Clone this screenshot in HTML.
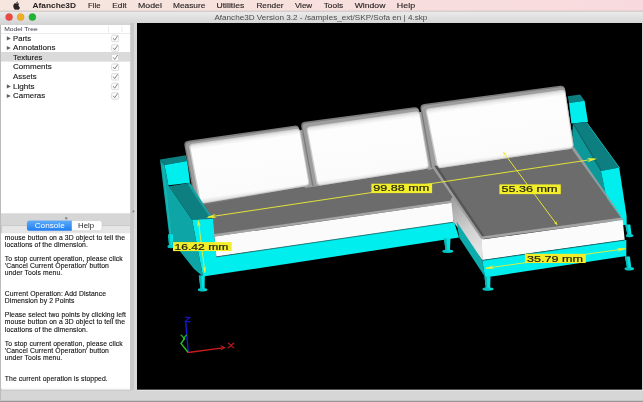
<!DOCTYPE html>
<html><head><meta charset="utf-8">
<style>
html,body{margin:0;padding:0;}
body{width:643px;height:402px;position:relative;overflow:hidden;background:#d6d6d6;font-family:"Liberation Sans",sans-serif;}
.abs{position:absolute;}
#console div{position:absolute;left:3.8px;font-size:6.8px;line-height:7.04px;letter-spacing:0.1px;color:#0c0c0c;white-space:pre;-webkit-text-stroke:0.1px #0c0c0c;}
svg text{font-family:"Liberation Sans",sans-serif;}
</style></head><body>
<div id="wrap" style="position:absolute;left:0;top:0;width:643px;height:402px;filter:blur(0.25px);">
<svg class="abs" style="left:0;top:0" width="643" height="402" viewBox="0 0 643 402">
<defs>
<linearGradient id="mbg" x1="0" y1="0" x2="1" y2="0"><stop offset="0" stop-color="#f6e6df"/><stop offset="0.5" stop-color="#f7e0dd"/><stop offset="1" stop-color="#f8dade"/></linearGradient>
<linearGradient id="tbg" x1="0" y1="0" x2="0" y2="1"><stop offset="0" stop-color="#ebebeb"/><stop offset="1" stop-color="#d2d2d2"/></linearGradient>
<linearGradient id="blue" x1="0" y1="0" x2="0" y2="1"><stop offset="0" stop-color="#5eaaf8"/><stop offset="1" stop-color="#1f7ef1"/></linearGradient>
</defs>
<rect x="0" y="0" width="643" height="402" fill="#d6d6d6"/>
<rect x="0" y="0" width="643" height="11" fill="url(#mbg)"/>
<rect x="0" y="10.8" width="643" height="0.8" fill="#b9adaa"/>
<rect x="0" y="11.6" width="643" height="13.4" fill="url(#tbg)"/>
<path transform="translate(13,1.3) scale(0.485)" d="M11.2 8.5c0-1.8 1.5-2.7 1.6-2.8-.9-1.3-2.2-1.5-2.7-1.5-1.1-.1-2.2.7-2.8.7-.6 0-1.5-.7-2.4-.7C3.6 4.2 2.1 5.1 1.4 6.5c-1.6 2.7-.4 6.7 1.1 8.9.8 1 1.6 2.2 2.7 2.1 1.1 0 1.5-.7 2.8-.7 1.3 0 1.7.7 2.8.7 1.2 0 1.9-1.1 2.6-2.1.8-1.2 1.2-2.4 1.2-2.4-.1 0-2.4-.9-2.4-3.5zM9.2 3.1c.6-.7 1-1.7.9-2.7-.9 0-1.9.6-2.5 1.3-.5.6-1 1.6-.9 2.6 1 .1 1.9-.5 2.5-1.2z" fill="#2a2424"/>
<text x="88.1" y="7.9" font-size="7.2" fill="#241e1e" font-weight="normal" textLength="12.6" lengthAdjust="spacingAndGlyphs" stroke="#241e1e" stroke-width="0.12">File</text><text x="112.3" y="7.9" font-size="7.2" fill="#241e1e" font-weight="normal" textLength="14.3" lengthAdjust="spacingAndGlyphs" stroke="#241e1e" stroke-width="0.12">Edit</text><text x="138" y="7.9" font-size="7.2" fill="#241e1e" font-weight="normal" textLength="23.9" lengthAdjust="spacingAndGlyphs" stroke="#241e1e" stroke-width="0.12">Model</text><text x="173" y="7.9" font-size="7.2" fill="#241e1e" font-weight="normal" textLength="32.4" lengthAdjust="spacingAndGlyphs" stroke="#241e1e" stroke-width="0.12">Measure</text><text x="216.5" y="7.9" font-size="7.2" fill="#241e1e" font-weight="normal" textLength="27.8" lengthAdjust="spacingAndGlyphs" stroke="#241e1e" stroke-width="0.12">Utilities</text><text x="256.4" y="7.9" font-size="7.2" fill="#241e1e" font-weight="normal" textLength="27.1" lengthAdjust="spacingAndGlyphs" stroke="#241e1e" stroke-width="0.12">Render</text><text x="294.9" y="7.9" font-size="7.2" fill="#241e1e" font-weight="normal" textLength="17.3" lengthAdjust="spacingAndGlyphs" stroke="#241e1e" stroke-width="0.12">View</text><text x="323.7" y="7.9" font-size="7.2" fill="#241e1e" font-weight="normal" textLength="19.5" lengthAdjust="spacingAndGlyphs" stroke="#241e1e" stroke-width="0.12">Tools</text><text x="354.7" y="7.9" font-size="7.2" fill="#241e1e" font-weight="normal" textLength="30.7" lengthAdjust="spacingAndGlyphs" stroke="#241e1e" stroke-width="0.12">Window</text><text x="396.8" y="7.9" font-size="7.2" fill="#241e1e" font-weight="normal" textLength="18.3" lengthAdjust="spacingAndGlyphs" stroke="#241e1e" stroke-width="0.12">Help</text><text x="32.5" y="7.9" font-size="7.4" fill="#221c1c" font-weight="bold" textLength="43.5" lengthAdjust="spacingAndGlyphs" >Afanche3D</text>
<circle cx="9.1" cy="17.1" r="3.5" fill="#ec4b45" stroke="#d63c37" stroke-width="0.4"/>
<circle cx="20.6" cy="17.1" r="3.5" fill="#eeae25" stroke="#d9981a" stroke-width="0.4"/>
<circle cx="32.4" cy="17.1" r="3.5" fill="#22b334" stroke="#179a28" stroke-width="0.4"/>
<text x="214.4" y="20.1" font-size="7" fill="#4c4c4c" font-weight="normal" textLength="213" lengthAdjust="spacingAndGlyphs" >Afanche3D Version 3.2 - /samples_ext/SKP/Sofa en | 4.skp</text>
<!-- tree -->
<rect x="1" y="25" width="129.3" height="188.3" fill="#fff"/>
<rect x="1" y="33" width="129.3" height="0.7" fill="#e2e2e2"/>
<rect x="108.2" y="26" width="0.7" height="6.5" fill="#e4e4e4"/>
<rect x="121.6" y="26" width="0.7" height="6.5" fill="#e4e4e4"/>
<text x="4.2" y="31" font-size="6" fill="#3a3a4a" font-weight="normal" textLength="33.6" lengthAdjust="spacingAndGlyphs" >Model Tree</text>
<polygon points="6.8,36.30 10.8,38.40 6.8,40.50" fill="#626262"/><text x="13.1" y="40.6" font-size="7.8" fill="#161616" font-weight="normal" textLength="17.9" lengthAdjust="spacingAndGlyphs" stroke="#161616" stroke-width="0.12">Parts</text><rect x="111.6" y="35.10" width="7" height="6.6" rx="1.3" fill="#fbfbfb" stroke="#cfcfcf" stroke-width="0.7"/><polyline points="113.2,38.20 114.7,40.20 117.6,35.80" fill="none" stroke="#7a7a7a" stroke-width="0.9"/><polygon points="6.8,45.90 10.8,48.00 6.8,50.10" fill="#626262"/><text x="13.1" y="50.2" font-size="7.8" fill="#161616" font-weight="normal" textLength="42.5" lengthAdjust="spacingAndGlyphs" stroke="#161616" stroke-width="0.12">Annotations</text><rect x="111.6" y="44.70" width="7" height="6.6" rx="1.3" fill="#fbfbfb" stroke="#cfcfcf" stroke-width="0.7"/><polyline points="113.2,47.80 114.7,49.80 117.6,45.40" fill="none" stroke="#7a7a7a" stroke-width="0.9"/><rect x="1" y="52.00" width="129.3" height="9.6" fill="#dadada"/><text x="13.1" y="59.8" font-size="7.8" fill="#161616" font-weight="normal" textLength="29.3" lengthAdjust="spacingAndGlyphs" stroke="#161616" stroke-width="0.12">Textures</text><rect x="111.6" y="54.30" width="7" height="6.6" rx="1.3" fill="#fbfbfb" stroke="#cfcfcf" stroke-width="0.7"/><polyline points="113.2,57.40 114.7,59.40 117.6,55.00" fill="none" stroke="#7a7a7a" stroke-width="0.9"/><text x="13.1" y="69.4" font-size="7.8" fill="#161616" font-weight="normal" textLength="38.7" lengthAdjust="spacingAndGlyphs" stroke="#161616" stroke-width="0.12">Comments</text><rect x="111.6" y="63.90" width="7" height="6.6" rx="1.3" fill="#fbfbfb" stroke="#cfcfcf" stroke-width="0.7"/><polyline points="113.2,67.00 114.7,69.00 117.6,64.60" fill="none" stroke="#7a7a7a" stroke-width="0.9"/><text x="13.1" y="79.0" font-size="7.8" fill="#161616" font-weight="normal" textLength="23.5" lengthAdjust="spacingAndGlyphs" stroke="#161616" stroke-width="0.12">Assets</text><rect x="111.6" y="73.50" width="7" height="6.6" rx="1.3" fill="#fbfbfb" stroke="#cfcfcf" stroke-width="0.7"/><polyline points="113.2,76.60 114.7,78.60 117.6,74.20" fill="none" stroke="#7a7a7a" stroke-width="0.9"/><polygon points="6.8,84.30 10.8,86.40 6.8,88.50" fill="#626262"/><text x="13.1" y="88.6" font-size="7.8" fill="#161616" font-weight="normal" textLength="21.5" lengthAdjust="spacingAndGlyphs" stroke="#161616" stroke-width="0.12">Lights</text><rect x="111.6" y="83.10" width="7" height="6.6" rx="1.3" fill="#fbfbfb" stroke="#cfcfcf" stroke-width="0.7"/><polyline points="113.2,86.20 114.7,88.20 117.6,83.80" fill="none" stroke="#7a7a7a" stroke-width="0.9"/><polygon points="6.8,93.90 10.8,96.00 6.8,98.10" fill="#626262"/><text x="13.1" y="98.19999999999999" font-size="7.8" fill="#161616" font-weight="normal" textLength="32" lengthAdjust="spacingAndGlyphs" stroke="#161616" stroke-width="0.12">Cameras</text><rect x="111.6" y="92.70" width="7" height="6.6" rx="1.3" fill="#fbfbfb" stroke="#cfcfcf" stroke-width="0.7"/><polyline points="113.2,95.80 114.7,97.80 117.6,93.40" fill="none" stroke="#7a7a7a" stroke-width="0.9"/>
<!-- console box -->
<rect x="1.5" y="225.5" width="129" height="165" fill="#e6e6e6" stroke="#c6c6c6" stroke-width="0.8"/>
<rect x="27" y="220.6" width="75" height="10.2" rx="2.6" fill="#fff" stroke="#c4c4c4" stroke-width="0.5"/>
<path d="M29.6,220.6 H71.8 V230.8 H29.6 A2.6,2.6 0 0 1 27,228.2 V223.2 A2.6,2.6 0 0 1 29.6,220.6Z" fill="url(#blue)"/>
<text x="34.7" y="228.3" font-size="7.4" fill="#ffffff" font-weight="normal" textLength="30" lengthAdjust="spacingAndGlyphs" >Console</text>
<text x="78.1" y="228.3" font-size="7.4" fill="#1e1e1e" font-weight="normal" textLength="16" lengthAdjust="spacingAndGlyphs" >Help</text>
<circle cx="66.2" cy="218.3" r="1.2" fill="#8a8a8a"/>
<rect x="130.3" y="23" width="3.7" height="367" fill="#c9c9c9"/><rect x="134" y="23" width="3" height="367" fill="#d9d9d9"/>
<circle cx="133.4" cy="211.4" r="1.1" fill="#8a8a8a"/>
<rect x="1" y="233.3" width="129" height="155.5" fill="#fff"/>
<!-- viewport -->
<rect x="137" y="23" width="505" height="366.8" fill="#000"/>
<rect x="137" y="389.8" width="506" height="1.2" fill="#e3e3e3"/>
<linearGradient id="bl" x1="0" y1="0" x2="0" y2="1"><stop offset="0" stop-color="#c8c8c8"/><stop offset="1" stop-color="#858585"/></linearGradient>
<rect x="0" y="400.3" width="643" height="1.7" fill="url(#bl)"/>
<rect x="0" y="25" width="0.8" height="375" fill="#b4b4b4"/>
<!-- SCENE -->
<filter id="soft" x="0" y="0" width="1" height="1"><feGaussianBlur stdDeviation="0.2"/></filter>
<g filter="url(#soft)">
<defs>
<linearGradient id="cushW" x1="0" y1="0" x2="0" y2="1"><stop offset="0" stop-color="#ffffff"/><stop offset="0.85" stop-color="#fcfcfc"/><stop offset="1" stop-color="#e4e4e4"/></linearGradient>
<linearGradient id="sideG" x1="0" y1="0" x2="0.3" y2="1"><stop offset="0" stop-color="#9a9a9a"/><stop offset="0.6" stop-color="#cfcfcf"/><stop offset="1" stop-color="#e2e2e2"/></linearGradient>
</defs>
<polygon points="160.00,159.50 164.50,164.90 168.40,185.30 192.10,219.80 203.00,276.60 194.00,269.00 169.50,237.90" fill="#0fa5a6" />
<line x1="163.2" y1="166" x2="170.8" y2="236.5" stroke="#16b8b8" stroke-width="1.3"/>
<polygon points="160.00,159.50 186.00,155.20 187.20,161.00 164.50,164.90" fill="#0c7f80" />
<polygon points="164.50,164.90 187.20,161.00 190.00,182.80 168.40,185.30" fill="#00eeee" />
<polygon points="567.80,96.20 580.10,94.40 584.60,100.70 569.00,102.90" fill="#0c7f80" />
<polygon points="569.00,102.90 584.60,100.70 588.00,121.90 571.40,123.40" fill="#00eeee" />
<polygon points="572.90,123.40 600.90,170.90 607.00,200.00 620.00,222.00 571.40,148.80" fill="#11999a" />
<polygon points="572.90,123.40 586.30,121.90 619.20,167.50 600.90,170.90" fill="#0c7f80" />
<line x1="574" y1="124.5" x2="601.8" y2="170.5" stroke="#0a6a6b" stroke-width="0.9"/>
<line x1="586.8" y1="122.8" x2="619.6" y2="168" stroke="#18b0b0" stroke-width="1"/>
<polygon points="600.90,170.90 619.20,167.50 626.60,216.00 626.70,225.00 612.00,225.00" fill="#00eeee" />
<polygon points="188.00,185.00 440.00,155.00 453.00,199.00 453.00,202.50 214.00,236.50 200.00,222.00" fill="#6c6c6c" />
<polygon points="431.00,160.00 565.00,140.00 571.40,148.80 622.70,219.90 482.00,239.00" fill="#6c6c6c" />
<polygon points="296.00,132.00 306.00,128.00 318.00,186.00 305.00,188.00" fill="#a0a0a0" />
<polygon points="415.00,113.00 425.00,111.00 438.00,168.00 428.00,170.00" fill="#a0a0a0" />
<linearGradient id="cg1" gradientUnits="userSpaceOnUse" x1="244.2" y1="136.4" x2="252.5" y2="195.1"><stop offset="0" stop-color="#cfcfcf"/><stop offset="0.05" stop-color="#eeeeee"/><stop offset="0.1" stop-color="#fdfdfd"/><stop offset="0.93" stop-color="#fbfbfb"/><stop offset="1" stop-color="#e2e2e2"/></linearGradient><path d="M184.51,145.93 Q183.70,141.50 188.15,140.86 L294.15,125.64 Q298.60,125.00 299.43,129.42 L309.07,181.08 Q309.90,185.50 305.47,186.30 L201.44,205.17 Q199.60,205.50 197.74,205.64 L197.36,205.66 Q195.50,205.80 195.16,203.96Z" fill="#7c7c7c" /><path d="M186.03,146.83 Q185.30,142.90 189.26,142.33 L294.84,127.07 Q298.80,126.50 299.54,130.43 L309.16,181.57 Q309.90,185.50 305.96,186.16 L201.29,203.75 Q199.80,204.00 198.53,204.82 L198.27,204.98 Q197.00,205.80 196.72,204.31Z" fill="#9e9e9e" /><path d="M189.34,148.23 Q188.60,144.30 192.56,143.74 L295.84,129.06 Q299.80,128.50 300.50,132.44 L309.20,181.56 Q309.90,185.50 305.96,186.16 L203.74,203.34 Q199.80,204.00 199.06,200.07Z" fill="#cdcdcd" /><path d="M190.56,148.34 Q189.90,144.90 193.36,144.39 L295.54,129.41 Q299.00,128.90 299.60,132.35 L308.10,181.05 Q308.70,184.50 305.25,185.09 L204.55,202.41 Q201.10,203.00 200.44,199.56Z" fill="url(#cg1)" />
<linearGradient id="cg2" gradientUnits="userSpaceOnUse" x1="362.8" y1="119.0" x2="371.0" y2="177.6"><stop offset="0" stop-color="#cfcfcf"/><stop offset="0.05" stop-color="#eeeeee"/><stop offset="0.1" stop-color="#fdfdfd"/><stop offset="0.93" stop-color="#fbfbfb"/><stop offset="1" stop-color="#e2e2e2"/></linearGradient><path d="M301.31,126.73 Q300.50,122.30 304.96,121.71 L414.04,107.29 Q418.50,106.70 419.29,111.13 L428.71,164.07 Q429.50,168.50 425.05,169.20 L319.01,185.87 Q316.90,186.20 314.76,186.34 L314.34,186.36 Q312.20,186.50 311.82,184.39Z" fill="#7c7c7c" /><path d="M302.83,127.63 Q302.10,123.70 306.07,123.17 L414.73,108.73 Q418.70,108.20 419.41,112.14 L428.79,164.56 Q429.50,168.50 425.55,169.11 L318.35,185.77 Q316.90,186.00 315.45,186.23 L315.15,186.27 Q313.70,186.50 313.43,185.05Z" fill="#9e9e9e" /><path d="M306.73,130.93 Q306.00,127.00 309.96,126.44 L415.54,111.56 Q419.50,111.00 420.19,114.94 L428.81,164.56 Q429.50,168.50 425.55,169.11 L320.85,185.39 Q316.90,186.00 316.17,182.07Z" fill="#cdcdcd" /><path d="M307.95,131.04 Q307.30,127.60 310.76,127.10 L415.24,111.90 Q418.70,111.40 419.29,114.85 L427.71,164.05 Q428.30,167.50 424.84,168.05 L321.66,184.45 Q318.20,185.00 317.55,181.56Z" fill="url(#cg2)" />
<linearGradient id="cg3" gradientUnits="userSpaceOnUse" x1="495.1" y1="99.2" x2="503.3" y2="158.7"><stop offset="0" stop-color="#cfcfcf"/><stop offset="0.05" stop-color="#eeeeee"/><stop offset="0.1" stop-color="#fdfdfd"/><stop offset="0.93" stop-color="#fbfbfb"/><stop offset="1" stop-color="#e2e2e2"/></linearGradient><path d="M420.57,109.03 Q419.80,104.60 424.26,104.00 L560.04,85.80 Q564.50,85.20 565.17,89.65 L573.33,143.85 Q574.00,148.30 569.55,148.96 L439.71,168.10 Q437.00,168.50 434.27,168.73 L433.73,168.77 Q431.00,169.00 430.53,166.30Z" fill="#7c7c7c" /><path d="M422.09,109.94 Q421.40,106.00 425.36,105.47 L560.74,87.23 Q564.70,86.70 565.30,90.66 L573.40,144.34 Q574.00,148.30 570.04,148.88 L439.04,168.20 Q437.00,168.50 434.95,168.73 L434.55,168.77 Q432.50,169.00 432.14,166.97Z" fill="#9e9e9e" /><path d="M425.98,112.72 Q425.20,108.80 429.16,108.25 L561.04,90.05 Q565.00,89.50 565.61,93.45 L573.39,144.35 Q574.00,148.30 570.04,148.88 L440.96,167.92 Q437.00,168.50 436.22,164.58Z" fill="#cdcdcd" /><path d="M427.20,112.83 Q426.50,109.40 429.97,108.91 L560.73,90.39 Q564.20,89.90 564.72,93.36 L572.28,143.84 Q572.80,147.30 569.34,147.82 L441.76,166.98 Q438.30,167.50 437.60,164.07Z" fill="url(#cg3)" />
<polygon points="571.40,148.80 574.00,147.00 622.00,217.00 619.20,214.50" fill="#9a9a9a" />
<polygon points="186.90,183.20 190.00,183.00 213.00,219.00 209.00,216.00" fill="#0fa5a6" />
<polygon points="169.00,186.20 186.90,183.20 209.00,216.00 213.00,219.00 192.10,219.80" fill="#0c7f80" />
<polygon points="192.10,219.80 213.00,219.00 216.30,256.70 453.70,220.80 459.00,237.60 203.00,276.60" fill="#00eeee" />
<polygon points="214.00,236.50 453.00,202.50 453.00,200.20 213.50,234.30" fill="#a4a4a4" />
<polygon points="214.50,236.50 453.40,202.50 453.40,222.00 216.30,256.70" fill="#fbfbfb" />
<line x1="216.3" y1="256.9" x2="453.4" y2="222.2" stroke="#1b5a5a" stroke-width="0.8"/>
<polygon points="453.00,196.00 483.50,238.50 482.30,260.20 453.40,222.00 451.00,199.00" fill="url(#sideG)" />
<polygon points="431.70,166.70 434.30,165.80 482.80,237.60 481.30,239.00" fill="#9c9c9c" />
<polygon points="434.30,165.80 437.30,165.80 485.50,237.60 482.80,237.60" fill="#575757" />
<polygon points="482.00,239.00 622.70,219.90 622.20,217.50 480.50,236.80" fill="#a4a4a4" />
<polygon points="482.00,239.50 622.70,219.90 624.70,239.90 482.30,260.20" fill="#fbfbfb" />
<polygon points="456.50,221.50 482.30,260.20 485.00,277.00 459.30,237.80" fill="#11acac" />
<polygon points="482.30,260.20 624.70,239.90 626.30,240.00 626.30,256.00 485.00,277.50" fill="#00eeee" />
<line x1="482.3" y1="260.4" x2="624.7" y2="240.1" stroke="#1b5a5a" stroke-width="0.8"/>
<polygon points="168.00,234.50 173.00,234.50 172.80,246.50 169.20,246.50" fill="#00e4e4" /><polygon points="168.00,234.50 169.90,234.50 170.57,246.50 169.20,246.50" fill="#0cb4b4" /><ellipse cx="171.0" cy="246.5" rx="3.5" ry="1.7" fill="#00d8d8"/><ellipse cx="169.7" cy="246.8" rx="2.1" ry="1.4" fill="#0cb0b0" opacity="0.6"/>
<polygon points="198.80,275.50 204.80,275.50 204.60,289.80 200.60,289.80" fill="#00e4e4" /><polygon points="198.80,275.50 201.08,275.50 202.12,289.80 200.60,289.80" fill="#0cb4b4" /><ellipse cx="202.6" cy="289.8" rx="4.8" ry="1.7" fill="#00d8d8"/><ellipse cx="200.9" cy="290.1" rx="2.9" ry="1.4" fill="#0cb0b0" opacity="0.6"/>
<polygon points="443.95,238.50 450.45,238.50 449.90,251.30 445.70,251.30" fill="#00e4e4" /><polygon points="443.95,238.50 446.42,238.50 447.30,251.30 445.70,251.30" fill="#0cb4b4" /><ellipse cx="447.8" cy="251.3" rx="5.5" ry="1.7" fill="#00d8d8"/><ellipse cx="445.8" cy="251.6" rx="3.3" ry="1.4" fill="#0cb0b0" opacity="0.6"/>
<polygon points="484.50,276.50 490.50,276.50 490.10,289.00 485.90,289.00" fill="#00e4e4" /><polygon points="484.50,276.50 486.78,276.50 487.50,289.00 485.90,289.00" fill="#0cb4b4" /><ellipse cx="488.0" cy="289.0" rx="5.5" ry="1.7" fill="#00d8d8"/><ellipse cx="486.0" cy="289.3" rx="3.3" ry="1.4" fill="#0cb0b0" opacity="0.6"/>
<polygon points="625.30,224.50 630.30,224.50 631.70,235.60 627.50,235.60" fill="#00e4e4" /><polygon points="625.30,224.50 627.20,224.50 629.10,235.60 627.50,235.60" fill="#0cb4b4" /><ellipse cx="629.6" cy="235.6" rx="3.8" ry="1.7" fill="#00d8d8"/><ellipse cx="628.2" cy="235.9" rx="2.2" ry="1.4" fill="#0cb0b0" opacity="0.6"/>
<polygon points="624.90,256.50 629.90,256.50 631.40,268.80 627.20,268.80" fill="#00e4e4" /><polygon points="624.90,256.50 626.80,256.50 628.80,268.80 627.20,268.80" fill="#0cb4b4" /><ellipse cx="629.3" cy="268.8" rx="4.8" ry="1.7" fill="#00d8d8"/><ellipse cx="627.6" cy="269.1" rx="2.9" ry="1.4" fill="#0cb0b0" opacity="0.6"/>
<g stroke="#eeee33" stroke-width="0.9" fill="none">
<line x1="208" y1="217.1" x2="595" y2="159"/>
<line x1="198.4" y1="221" x2="204.9" y2="272.5"/>
<line x1="503.6" y1="152.5" x2="556.8" y2="224.5"/>
<line x1="486" y1="268.2" x2="625" y2="248.8"/>
</g>
<polygon points="206.20,217.40 216.42,218.09 213.12,216.36 215.76,213.74" fill="#eeee33" />
<polygon points="597.10,158.70 586.88,158.01 590.18,159.74 587.54,162.36" fill="#eeee33" />
<polygon points="198.10,219.60 197.22,226.77 198.73,224.46 200.79,226.31" fill="#eeee33" />
<polygon points="205.10,273.50 205.98,266.33 204.47,268.64 202.41,266.79" fill="#eeee33" />
<polygon points="503.00,151.80 504.10,155.97 504.67,154.05 506.67,154.06" fill="#eeee33" />
<polygon points="557.30,225.00 556.20,220.83 555.63,222.75 553.63,222.74" fill="#eeee33" />
<polygon points="484.20,268.50 494.38,269.09 491.13,267.53 493.83,265.13" fill="#eeee33" />
<polygon points="627.00,248.50 616.82,247.91 620.07,249.47 617.37,251.87" fill="#eeee33" />
<g fill="#f2ee2a">
<rect x="371.4" y="183.7" width="60.7" height="9.4"/>
<rect x="173" y="242.1" width="58.7" height="9"/>
<rect x="499.4" y="184.4" width="61.4" height="9.7"/>
<rect x="524.9" y="253.8" width="60.9" height="9.2"/>
</g>
<g font-family="Liberation Sans" font-size="9" fill="#24240f" stroke="#24240f" stroke-width="0.2">
<text x="373.2" y="191.3" textLength="56" lengthAdjust="spacingAndGlyphs">99.88 mm</text>
<text x="174.5" y="249.9" textLength="53.8" lengthAdjust="spacingAndGlyphs">16.42 mm</text>
<text x="501.4" y="192.1" textLength="56" lengthAdjust="spacingAndGlyphs">55.36 mm</text>
<text x="527" y="261.6" textLength="56" lengthAdjust="spacingAndGlyphs">35.79 mm</text>
</g>
<g stroke-width="1.4" fill="none" stroke-linecap="round">
<line x1="188.2" y1="352.5" x2="185.8" y2="323" stroke="#1a1ad8"/>
<polyline points="188.2,352.5 181,343.5 184.5,338.5" stroke="#22c022"/>
<line x1="188.2" y1="352.5" x2="224.6" y2="347.6" stroke="#c81c1c"/>
<polyline points="221,345.8 224.6,347.6 221.2,349.6" stroke="#c81c1c" stroke-width="1"/>
</g>
<g font-family="Liberation Sans" font-size="8" stroke-width="0.3">
<text x="184.3" y="321.6" fill="#1a1ad8" stroke="#1a1ad8" textLength="6.5" lengthAdjust="spacingAndGlyphs">Z</text>
<text x="180.2" y="340.2" fill="#22c022" stroke="#22c022" textLength="7" lengthAdjust="spacingAndGlyphs">Y</text>
<text x="227.3" y="348" fill="#c81c1c" stroke="#c81c1c" textLength="7.5" lengthAdjust="spacingAndGlyphs">X</text>
</g>
</g>
</svg>
<div id="console" class="abs" style="left:1px;top:233.5px;width:129px;height:157px;">
<div style="top:0.50px">mouse button on a 3D object to tell the</div><div style="top:7.54px">locations of the dimension.</div><div style="top:21.62px">To stop current operation, please click</div><div style="top:28.66px">'Cancel Current Operation' button</div><div style="top:35.70px">under Tools menu.</div><div style="top:56.82px">Current Operation: Add Distance</div><div style="top:63.86px">Dimension by 2 Points</div><div style="top:77.94px">Please select two points by clicking left</div><div style="top:84.98px">mouse button on a 3D object to tell the</div><div style="top:92.02px">locations of the dimension.</div><div style="top:106.10px">To stop current operation, please click</div><div style="top:113.14px">'Cancel Current Operation' button</div><div style="top:120.18px">under Tools menu.</div><div style="top:141.30px">The current operation is stopped.</div>
</div>
</div>
</body></html>
